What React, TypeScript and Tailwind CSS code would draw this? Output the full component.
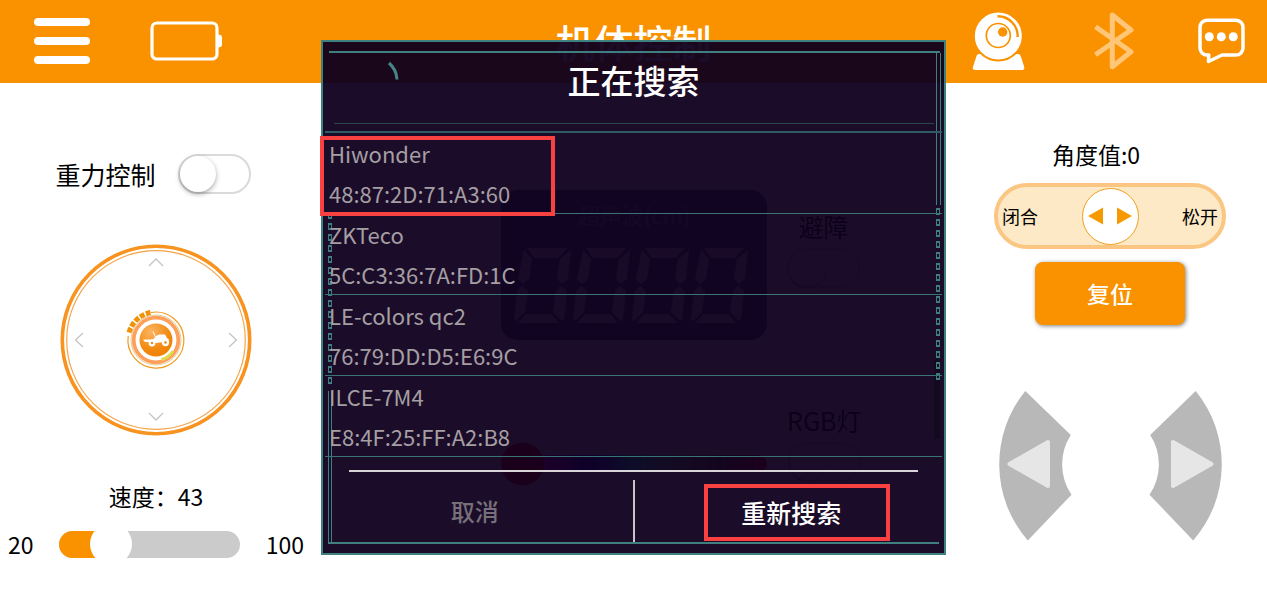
import { useState } from "react";

const DEVICES = [
  { name: "Hiwonder", mac: "48:87:2D:71:A3:60" },
  { name: "ZKTeco", mac: "5C:C3:36:7A:FD:1C" },
  { name: "LE-colors qc2", mac: "76:79:DD:D5:E6:9C" },
  { name: "ILCE-7M4", mac: "E8:4F:25:FF:A2:B8" },
];

function WebcamIcon() {
  return (
    <svg width="54" height="58" viewBox="0 0 54 58" fill="none">
      <path d="M7 42h39q2 0 2.700 2l3.500 11q.6 3-2 3H3q-2.800 0-2-3l3.500-11Q5.200 42 7 42z" fill="#fff" />
      <circle cx="26.300" cy="24" r="24.500" fill="#fff" stroke="#fa9200" strokeWidth="2" />
      <circle cx="26.300" cy="23.500" r="12" stroke="#fa9200" strokeWidth="1.700" />
      <circle cx="30.700" cy="20" r="4.700" fill="#fa9200" />
      <path d="M25.500 4.200A20 20 0 0 1 45.700 25" stroke="#fa9200" strokeWidth="2.400" />
    </svg>
  );
}

function BluetoothIcon() {
  return (
    <svg width="44" height="58" viewBox="0 0 44 58" fill="none">
      <path
        d="M5.500 14.700 41 39.800 22.300 54.700V3L41 18 5.500 42.700"
        stroke="#ffc678"
        strokeWidth="5"
        strokeLinejoin="round"
      />
    </svg>
  );
}

function ChatIcon() {
  return (
    <svg width="47" height="46" viewBox="0 0 47 46" fill="none">
      <path
        d="M9 2.300H38a7 7 0 0 1 7 7V30a7 7 0 0 1-7 7H24L10.500 43.500 10.800 37H9a7 7 0 0 1-7-7V9.300a7 7 0 0 1 7-7z"
        stroke="#fff"
        strokeWidth="3.500"
        strokeLinejoin="round"
      />
      <circle cx="11.300" cy="18.700" r="4.500" fill="#fff" />
      <circle cx="23.300" cy="18.700" r="4.500" fill="#fff" />
      <circle cx="35.300" cy="18.700" r="4.500" fill="#fff" />
    </svg>
  );
}

function Joystick() {
  return (
    <svg width="192" height="192" viewBox="-96 -96 192 192" fill="none" role="img" aria-label="方向">
      <defs>
        <radialGradient id="knob" cx="0.35" cy="0.25" r="0.9">
          <stop offset="0" stopColor="#fbb462" />
          <stop offset="0.6" stopColor="#f28a10" />
          <stop offset="1" stopColor="#ee7c00" />
        </radialGradient>
      </defs>
      <circle r="93.700" stroke="#f7931e" strokeWidth="3.600" />
      <circle r="89.300" stroke="#f5a54a" strokeWidth="1.200" />
      <g stroke="#c4c4c4" strokeWidth="1.300">
        <path d="M-7-74 0-81 7-74" />
        <path d="M-7 73 0 80 7 73" />
        <path d="M-73-7-80.500 0-73 7" />
        <path d="M73-7 80.500 0 73 7" />
      </g>
      <path d="M-5-27.500A28 28 0 1 1-27.800-4" stroke="#f09a1e" strokeWidth="1.200" />
      <circle r="25" stroke="#d9c07a" strokeWidth="0.800" />
      <circle r="22.300" stroke="#ff9f5c" strokeWidth="3.800" />
      <path d="M5.500 19.500A20 20 0 0 0 17 11" stroke="#dbe04a" strokeWidth="3" />
      <path d="M-27-7.500A28 28 0 0 1-5.500-27.500" stroke="#f09208" strokeWidth="5" strokeDasharray="5 1.500" />
      <circle r="16.500" fill="url(#knob)" />
      <g fill="#fff">
        <circle cx="-4" cy="3" r="3.400" />
        <circle cx="9.500" cy="2.500" r="3.700" />
        <path d="M-13-.5h7V2h-5zM-7 0l4.500-1L0-4l3-1.500h6L11-2l2 1.500-2 2L4 2.500 0 3z" />
        <path d="M-3-8.500-.5-3" stroke="#fff" strokeWidth="1" />
      </g>
      <circle cx="-4" cy="3" r="1.200" fill="#f08a10" />
      <circle cx="9.500" cy="2.500" r="1.300" fill="#f08a10" />
    </svg>
  );
}

function FanArrow({ flip = false }: { flip?: boolean }) {
  return (
    <svg width="73" height="150" viewBox="0 0 73 150" className={flip ? "-scale-x-100" : ""}>
      <path d="M26.300 0 71.800 44A54 54 0 0 0 72.500 103.700L28.800 149.500A116 116 0 0 1 26.300 0z" fill="#b8b8b8" />
      <path d="M10.500 73 49 51V95z" fill="#e6e6e6" stroke="#e6e6e6" strokeWidth="4" strokeLinejoin="round" />
    </svg>
  );
}

function Digits() {
  return (
    <svg width="240" height="76" viewBox="0 0 240 76" fill="#d8c0d8" role="img" aria-label="0000">
      {[0, 59, 118, 177].map((x) => (
        <g key={x} transform={`translate(${x} 0)`}>
          <path d="M13 0H53L44 10H20z" />
          <path d="M10 2 18 11 15 31 9 36 4 31z" />
          <path d="M57 2 54 31 48 36 43 31 46 11z" />
          <path d="M8 38 14 43 11 64 2 73 0 71 3 43z" />
          <path d="M47 38 53 43 50 71 48 73 39 64 42 43z" />
          <path d="M12 66H37L45 75H4z" />
        </g>
      ))}
    </svg>
  );
}

function Toggle({ label }: { label: string }) {
  return (
    <input
      type="checkbox"
      role="switch"
      aria-label={label}
      className="h-10 w-[73px] shrink-0 appearance-none rounded-full border-2 border-[#dadada] bg-white before:block before:size-9 before:rounded-full before:bg-white before:shadow-[0_2px_5px_rgba(0,0,0,0.35)] before:content-[''] checked:bg-[#fa9200] checked:before:translate-x-8"
    />
  );
}

function Dashes() {
  return (
    <div className="flex flex-col gap-1">
      {Array.from({ length: 16 }, (_, i) => (
        <span key={i} className="h-[7px] w-1 border-x border-y-2 border-[#3f7f80]" />
      ))}
    </div>
  );
}

function Header() {
  return (
    <header className="grid h-[83px] grid-cols-[1fr_auto_1fr] items-center bg-[#fa9200] pb-[2px] text-white">
      <div className="flex items-center gap-[60px] pl-[34px]">
        <button aria-label="菜单" className="flex flex-col gap-[11px]">
          <span className="h-2 w-14 rounded-full bg-white" />
          <span className="h-2 w-14 rounded-full bg-white" />
          <span className="h-2 w-14 rounded-full bg-white" />
        </button>
        <svg width="72" height="40" viewBox="0 0 72 40" fill="none" role="img" aria-label="电量">
          <rect x="2" y="2" width="65" height="36" rx="5" stroke="#fff" strokeWidth="3.200" />
          <path d="M68 13.500q4 0 4 3v7q0 3-4 3z" fill="#fff" />
        </svg>
      </div>
      <h1 className="text-[39px] leading-[60px] font-medium">机体控制</h1>
      <div className="flex items-center justify-end gap-16 pr-[22px]">
        <button aria-label="摄像头">
          <WebcamIcon />
        </button>
        <button aria-label="蓝牙">
          <BluetoothIcon />
        </button>
        <button aria-label="消息">
          <ChatIcon />
        </button>
      </div>
    </header>
  );
}

function LeftPanel() {
  const [speed, setSpeed] = useState(43);
  const percent = ((speed - 20) / 80) * 100;
  return (
    <section className="flex flex-col items-center pt-[71px]">
      <label className="flex items-center gap-[22px] pr-[6px] text-[25px] leading-9">
        重力控制
        <Toggle label="重力控制" />
      </label>
      <div className="mt-[50px]">
        <Joystick />
      </div>
      <label htmlFor="speed" className="mt-[42px] text-[23px] leading-9">
        速度：{speed}
      </label>
      <div className="mt-3 flex w-full items-center justify-between px-2 text-[23px] leading-9">
        <span>20</span>
        <div className="relative h-[27px] w-[181px] overflow-hidden rounded-full bg-[#cbcbcb]">
          <div className="h-full bg-[#fa9200]" style={{ width: `${percent}%` }} />
          <div
            className="absolute top-1/2 size-[42px] -translate-1/2 rounded-full bg-white"
            style={{ left: `${percent}%` }}
          />
          <input
            id="speed"
            type="range"
            min={20}
            max={100}
            value={speed}
            onChange={(e) => setSpeed(Number(e.target.value))}
            className="absolute inset-0 opacity-0"
          />
        </div>
        <span>100</span>
      </div>
    </section>
  );
}

function CenterPanel() {
  return (
    <section className="flex flex-col gap-[62px] pt-[107px] pl-[189px] text-[25px] leading-9">
      <div className="flex gap-5">
        <div className="flex h-[150px] w-[266px] flex-col items-center gap-[16px] rounded-2xl bg-[#405090] pt-[6px]">
          <span className="text-[22px] text-[#9090c0]">超声波(cm)</span>
          <Digits />
        </div>
        <div className="flex flex-col items-center gap-1 pt-[18px]">
          <span>避障</span>
          <Toggle label="避障" />
        </div>
      </div>
      <div className="flex gap-5">
        <div className="relative mt-[53px] h-[17px] w-[266px] rounded-full bg-[linear-gradient(90deg,#ff0000,#ff00ff,#0000ff,#00ffff,#60c060,#806040,#ff0000)]">
          <span className="absolute top-1/2 left-0 size-[43px] -translate-y-1/2 rounded-full bg-[#ff0000]" />
        </div>
        <div className="flex flex-col items-center gap-1">
          <span>RGB灯</span>
          <Toggle label="RGB灯" />
        </div>
      </div>
    </section>
  );
}

function RightPanel() {
  return (
    <section className="flex flex-col items-center pt-[53px] pr-[2px]">
      <p className="pr-7 text-[23px] leading-9">角度值:0</p>
      <div className="mt-[11px] flex h-[66px] w-[232px] items-center justify-between rounded-full border-4 border-[#fac682] bg-[#fee9c6] px-1 text-lg">
        <span>闭合</span>
        <button
          aria-label="角度调节"
          className="flex size-[57px] items-center justify-center rounded-full border border-[#f0a020] bg-white"
        >
          <svg width="44" height="18" viewBox="0 0 44 18" fill="#f59a00">
            <path d="M0 9 15 .5v17zM44 9 29 .5v17z" />
          </svg>
        </button>
        <span>松开</span>
      </div>
      <button className="mt-[13px] h-[63px] w-[150px] rounded-lg bg-[#fa9200] text-[23px] font-medium text-white shadow-[1px_1px_4px_rgba(0,0,0,0.5)]">
        复位
      </button>
      <div className="mt-[66px] flex gap-[77px]">
        <button aria-label="左转">
          <FanArrow />
        </button>
        <button aria-label="右转">
          <FanArrow flip />
        </button>
      </div>
    </section>
  );
}

function SearchDialog() {
  return (
    <div className="absolute inset-x-0 top-10 flex justify-center">
      <div
        role="dialog"
        aria-labelledby="search-title"
        className="relative w-full max-w-[625px] border-2 border-[#3f8080] bg-[rgba(15,0,30,0.95)] px-[2px] pb-[11px]"
      >
        <div aria-hidden="true" className="pointer-events-none absolute inset-0">
          <span className="absolute right-[4px] bottom-[114px] h-20 w-[6px] bg-[#140a20]" />
          <span className="absolute top-[9px] right-[4px] left-[6px] h-[2px] bg-[#3f7f80]" />
          <span className="absolute top-[11px] right-[3px] h-[152px] w-[5px] border-x border-[#3f7f80]" />
          <div className="absolute top-[166px] right-[4px]">
            <Dashes />
          </div>
          <div className="absolute top-[170px] left-[5px]">
            <Dashes />
          </div>
          <span className="absolute bottom-[9px] left-[5px] h-[153px] w-[4px] border-x border-[#3f7f80]" />
          <span className="absolute right-[5px] bottom-[9px] left-[5px] h-[2px] bg-[#3f7f80]" />
        </div>

        <div className="relative flex h-[89px] flex-col items-center pt-[14px]">
          <svg width="14" height="22" viewBox="0 0 14 22" fill="none" className="absolute top-[18px] left-[62px]">
            <path d="M2 3Q9.500 9.500 10 19.500" stroke="#458584" strokeWidth="3" />
          </svg>
          <h2 id="search-title" className="text-[33px] leading-[48px] font-medium text-white">
            正在搜索
          </h2>
          <span className="mt-[19px] h-px w-[600px] max-w-full bg-[#2c4650]" />
        </div>

        <ul className="relative border-t-2 border-[#2f5c64] text-[22px] leading-10 text-[#a59fa3]">
          {DEVICES.map((d) => (
            <li key={d.mac} className="border-b border-[#3a7576]">
              <button className="block w-full pl-1 text-left">
                <span className="block">{d.name}</span>
                <span className="block">{d.mac}</span>
              </button>
            </li>
          ))}
          <li aria-hidden="true" className="absolute top-[3px] -left-[5px] h-20 w-[235px] border-4 border-[#fa4141]" />
        </ul>

        <div className="mx-6 mt-[13px] border-t-2 border-[#d8d4d8]" />
        <div className="relative grid h-[70px] grid-cols-[1fr_2px_1fr] text-[25px]">
          <button className="pt-2 pr-2 text-[24px] font-medium text-[#77707a]">取消</button>
          <span className="mt-2 bg-[#c8c4cc]" />
          <div className="flex justify-center pt-3 pl-[18px]">
            <button className="h-[57px] w-[186px] border-4 border-[#fa4141] pr-3 font-medium text-white">
              重新搜索
            </button>
          </div>
        </div>
      </div>
    </div>
  );
}

export default function App() {
  return (
    <div className="relative min-h-screen bg-white font-['Noto_Sans_CJK_SC',sans-serif] text-black">
      <Header />
      <main className="grid grid-cols-[312px_1fr_312px]">
        <LeftPanel />
        <CenterPanel />
        <RightPanel />
      </main>
      <SearchDialog />
    </div>
  );
}
